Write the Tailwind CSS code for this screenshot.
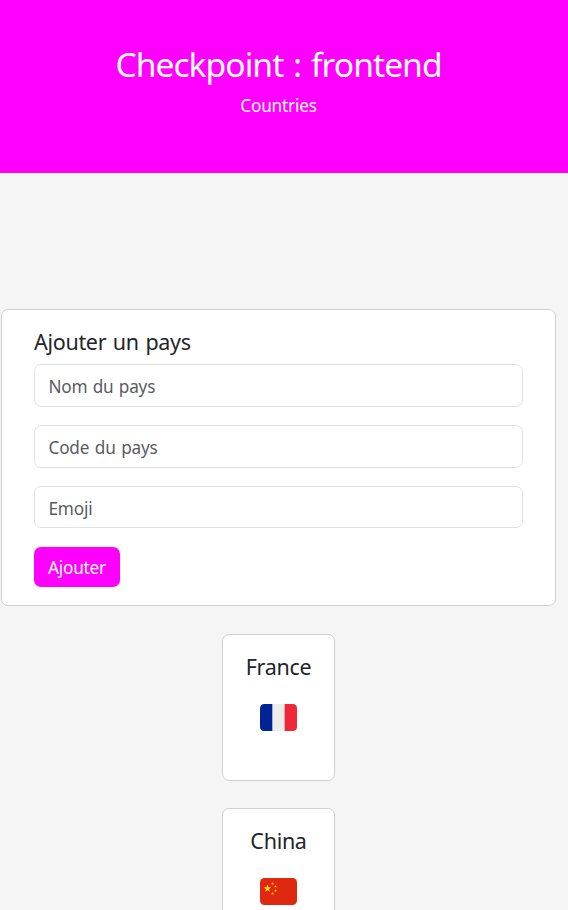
<!DOCTYPE html>
<html lang="fr">
<head>
<meta charset="utf-8">
<title>Countries</title>
<script src="https://cdn.jsdelivr.net/npm/@tailwindcss/browser@4"></script>
</head>
<body class="h-[910px] overflow-hidden bg-[#f5f5f5] font-['Segoe_UI','Noto_Sans',sans-serif] text-[17.2px] text-[#212529]">
<header class="flex h-[173px] flex-col items-center bg-[#ff00ff] pt-[42px] pr-[11px] text-white">
  <h1 class="text-[33.6px] leading-[44px] tracking-[-0.95px] whitespace-nowrap [word-spacing:2px]">Checkpoint : frontend</h1>
  <p class="mt-[6px] leading-[27px] tracking-[-0.2px]">Countries</p>
</header>
<main class="flex w-[557px] flex-col items-center pt-[136px]">
  <form class="h-[297px] w-[555px] rounded-[7px] border border-[#d0d0d0] bg-white px-8 pt-[18px]">
    <h2 class="text-[21.5px] leading-[27px] tracking-[-0.3px] [word-spacing:1.3px]">Ajouter un pays</h2>
    <div class="mt-[9px] flex flex-col items-start gap-[18px]">
      <input class="h-[43px] w-[489px] rounded-[7px] border border-[#dee2e6] px-[13.5px] pt-[2px] tracking-[-0.2px] [word-spacing:1px] placeholder:text-[#595c5f]" placeholder="Nom du pays">
      <input class="h-[43px] w-[489px] rounded-[7px] border border-[#dee2e6] px-[13.5px] pt-[2px] tracking-[-0.2px] [word-spacing:1.3px] placeholder:text-[#595c5f]" placeholder="Code du pays">
      <input class="h-[42px] w-[489px] rounded-[7px] border border-[#dee2e6] px-[13.5px] pt-[2px] tracking-[-0.2px] placeholder:text-[#595c5f]" placeholder="Emoji">
    </div>
    <button type="button" class="mt-[19px] flex h-10 w-[86px] items-center justify-center rounded-[7px] bg-[#ff00ff] pt-[2px] tracking-[-0.2px] text-white">Ajouter</button>
  </form>
  <section class="mt-7 flex flex-col gap-[27px]">
    <article class="flex h-[147px] w-[113px] flex-col items-center rounded-[7px] border border-[#d0d0d0] bg-white pt-[18px]">
      <h3 class="text-[21.5px] leading-[27px] tracking-[-0.3px]">France</h3>
      <svg class="mt-6 h-[27px] w-[37px]" viewBox="0 0 37 27">
        <rect width="37" height="27" rx="4.5" fill="#ededed"/>
        <path d="M12.3 0H4.5Q0 0 0 4.5v18Q0 27 4.500 27h7.800z" fill="#002495"/>
        <path d="M24.600 0h7.900Q37 0 37 4.500v18Q37 27 32.500 27h-7.900z" fill="#ed2939"/>
      </svg>
    </article>
    <article class="flex h-[147px] w-[113px] flex-col items-center rounded-[7px] border border-[#d0d0d0] bg-white pt-[18px]">
      <h3 class="text-[21.5px] leading-[27px] tracking-[-0.3px]">China</h3>
      <svg class="mt-6 h-[27px] w-[37px]" viewBox="0 0 37 27">
        <defs><path id="star" d="M0-4 .95-1.250 3.800-1.200 1.500.5 2.350 3.200 0 1.600-2.350 3.200-1.500.5-3.800-1.200-.95-1.250z"/></defs>
        <rect width="37" height="27" rx="4.500" fill="#de2910"/>
        <g fill="#ffde00">
          <use href="#star" transform="translate(7.500 10.500)"/>
          <use href="#star" transform="translate(12.500 5.500) scale(.4)"/>
          <use href="#star" transform="translate(15.500 8.400) scale(.4)"/>
          <use href="#star" transform="translate(15.500 12.700) scale(.4)"/>
          <use href="#star" transform="translate(12.500 15.500) scale(.4)"/>
        </g>
      </svg>
    </article>
  </section>
</main>
</body>
</html>
